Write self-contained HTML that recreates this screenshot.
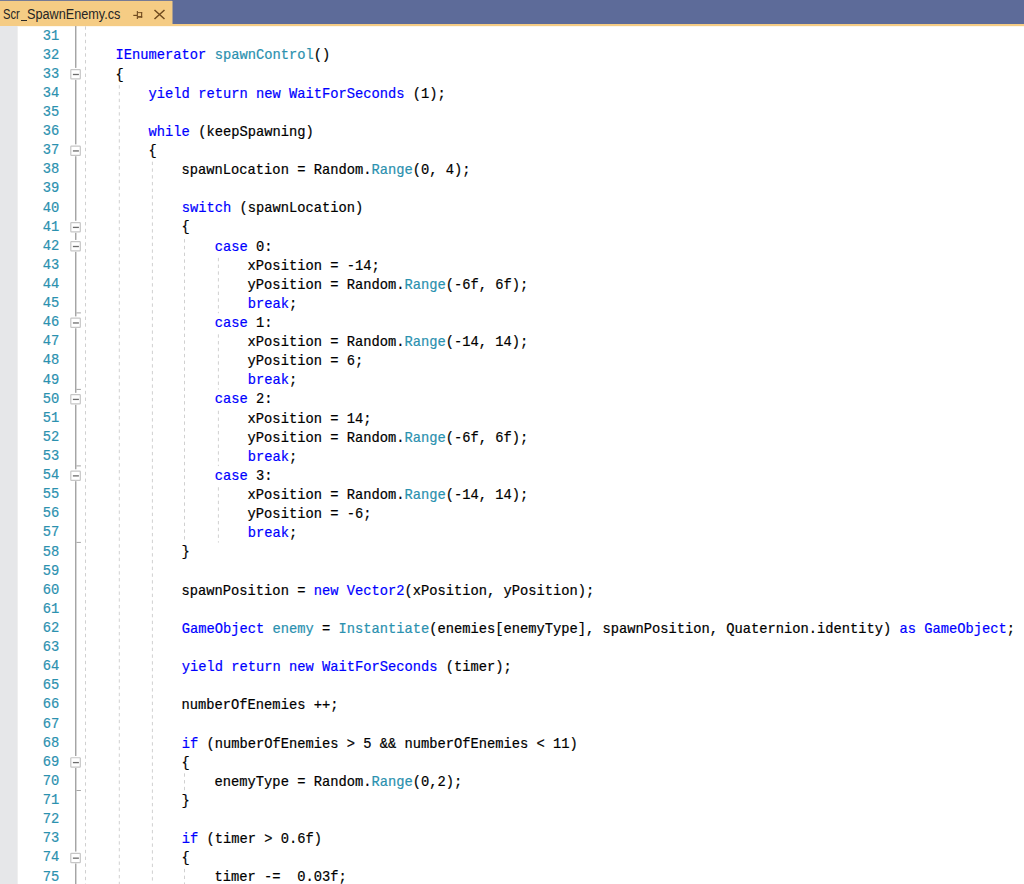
<!DOCTYPE html>
<html><head><meta charset="utf-8"><title>Scr_SpawnEnemy.cs</title>
<style>
html,body{margin:0;padding:0}
body{width:1024px;height:884px;overflow:hidden;background:#fff;position:relative;font-family:"Liberation Mono",monospace}
.bar{position:absolute;left:0;top:0;width:1024px;height:24px;background:#5D6B99}
.strip{position:absolute;left:0;top:24px;width:1024px;height:2px;background:#F5CC84}
.tab{position:absolute;left:0;top:1px;width:172px;height:25px;background:#F5CC84}
.tabt{position:absolute;left:2.6px;top:5.5px;font-family:"Liberation Sans",sans-serif;font-size:14px;transform:scaleX(0.893);transform-origin:0 0;color:#252525;white-space:pre;line-height:16px}
.gut{position:absolute;left:0;top:26px;width:17px;height:858px;background:#E6E7E9;border-right:1px solid #EFEFEF}
.ln,.cd{position:absolute;height:19.125px;line-height:19.125px;font-size:13.75px;white-space:pre}
.ln{left:18px;width:41.3px;text-align:right;color:#2B91AF}
.cd{left:82.6px;color:#000;margin-top:0.8px}
b{font-weight:normal}
.ln,.cd{-webkit-text-stroke:0.2px}
.k{color:#0000FF}
.t{color:#2B91AF}
</style></head><body>
<div class="bar"></div>
<div class="tab"></div>
<div class="strip"></div>
<div style="position:absolute;left:0;top:0;width:172px;height:1px;background:#767B95"></div>
<div style="position:absolute;left:172px;top:1px;width:1px;height:23px;background:#A99D8E"></div>
<div style="position:absolute;left:18px;top:26px;width:1006px;height:1px;background:#FDF7EC"></div>
<div class="tabt" style="left:3.4px;transform:scaleX(0.8)">Scr</div>
<div style="position:absolute;left:21px;top:20px;width:5.8px;height:1.1px;background:#2A2A2A"></div>
<div class="tabt" style="left:26.9px;transform:scaleX(0.905)">SpawnEnemy.cs</div>
<svg style="position:absolute;left:0;top:0" width="172" height="26">
<g stroke="#6F4A1E" fill="none">
<g fill="#6F4A1E" stroke="none"><rect x="133.3" y="14.8" width="3.7" height="1.2"/><rect x="136.8" y="11" width="1.1" height="8"/><rect x="137.9" y="12.2" width="4.3" height="0.9"/><rect x="141.1" y="12.2" width="1.1" height="5.5"/><rect x="137.9" y="16.1" width="4.3" height="1.6"/></g>
<path d="M154.5 10l10 9 M164.5 10l-10 9" stroke-width="1.5"/>
</g></svg>
<div class="gut"></div>

<div class="ln" style="top:26.500px">31</div>
<div class="ln" style="top:45.614px">32</div>
<div class="cd" style="top:45.614px">    <b class="k">IEnumerator</b> <b class="t">spawnControl</b>()</div>
<div class="ln" style="top:64.728px">33</div>
<div class="cd" style="top:64.728px">    {</div>
<div class="ln" style="top:83.842px">34</div>
<div class="cd" style="top:83.842px">        <b class="k">yield</b> <b class="k">return</b> <b class="k">new</b> <b class="k">WaitForSeconds</b> (1);</div>
<div class="ln" style="top:102.956px">35</div>
<div class="ln" style="top:122.070px">36</div>
<div class="cd" style="top:122.070px">        <b class="k">while</b> (keepSpawning)</div>
<div class="ln" style="top:141.184px">37</div>
<div class="cd" style="top:141.184px">        {</div>
<div class="ln" style="top:160.298px">38</div>
<div class="cd" style="top:160.298px">            spawnLocation = Random.<b class="t">Range</b>(0, 4);</div>
<div class="ln" style="top:179.412px">39</div>
<div class="ln" style="top:198.526px">40</div>
<div class="cd" style="top:198.526px">            <b class="k">switch</b> (spawnLocation)</div>
<div class="ln" style="top:217.640px">41</div>
<div class="cd" style="top:217.640px">            {</div>
<div class="ln" style="top:236.754px">42</div>
<div class="cd" style="top:236.754px">                <b class="k">case</b> 0:</div>
<div class="ln" style="top:255.868px">43</div>
<div class="cd" style="top:255.868px">                    xPosition = -14;</div>
<div class="ln" style="top:274.982px">44</div>
<div class="cd" style="top:274.982px">                    yPosition = Random.<b class="t">Range</b>(-6f, 6f);</div>
<div class="ln" style="top:294.096px">45</div>
<div class="cd" style="top:294.096px">                    <b class="k">break</b>;</div>
<div class="ln" style="top:313.210px">46</div>
<div class="cd" style="top:313.210px">                <b class="k">case</b> 1:</div>
<div class="ln" style="top:332.324px">47</div>
<div class="cd" style="top:332.324px">                    xPosition = Random.<b class="t">Range</b>(-14, 14);</div>
<div class="ln" style="top:351.438px">48</div>
<div class="cd" style="top:351.438px">                    yPosition = 6;</div>
<div class="ln" style="top:370.552px">49</div>
<div class="cd" style="top:370.552px">                    <b class="k">break</b>;</div>
<div class="ln" style="top:389.666px">50</div>
<div class="cd" style="top:389.666px">                <b class="k">case</b> 2:</div>
<div class="ln" style="top:408.780px">51</div>
<div class="cd" style="top:408.780px">                    xPosition = 14;</div>
<div class="ln" style="top:427.894px">52</div>
<div class="cd" style="top:427.894px">                    yPosition = Random.<b class="t">Range</b>(-6f, 6f);</div>
<div class="ln" style="top:447.008px">53</div>
<div class="cd" style="top:447.008px">                    <b class="k">break</b>;</div>
<div class="ln" style="top:466.122px">54</div>
<div class="cd" style="top:466.122px">                <b class="k">case</b> 3:</div>
<div class="ln" style="top:485.236px">55</div>
<div class="cd" style="top:485.236px">                    xPosition = Random.<b class="t">Range</b>(-14, 14);</div>
<div class="ln" style="top:504.350px">56</div>
<div class="cd" style="top:504.350px">                    yPosition = -6;</div>
<div class="ln" style="top:523.464px">57</div>
<div class="cd" style="top:523.464px">                    <b class="k">break</b>;</div>
<div class="ln" style="top:542.578px">58</div>
<div class="cd" style="top:542.578px">            }</div>
<div class="ln" style="top:561.692px">59</div>
<div class="ln" style="top:580.806px">60</div>
<div class="cd" style="top:580.806px">            spawnPosition = <b class="k">new</b> <b class="k">Vector2</b>(xPosition, yPosition);</div>
<div class="ln" style="top:599.920px">61</div>
<div class="ln" style="top:619.034px">62</div>
<div class="cd" style="top:619.034px">            <b class="k">GameObject</b> <b class="t">enemy</b> = <b class="t">Instantiate</b>(enemies[enemyType], spawnPosition, Quaternion.identity) <b class="k">as</b> <b class="k">GameObject</b>;</div>
<div class="ln" style="top:638.148px">63</div>
<div class="ln" style="top:657.262px">64</div>
<div class="cd" style="top:657.262px">            <b class="k">yield</b> <b class="k">return</b> <b class="k">new</b> <b class="k">WaitForSeconds</b> (timer);</div>
<div class="ln" style="top:676.376px">65</div>
<div class="ln" style="top:695.490px">66</div>
<div class="cd" style="top:695.490px">            numberOfEnemies ++;</div>
<div class="ln" style="top:714.604px">67</div>
<div class="ln" style="top:733.718px">68</div>
<div class="cd" style="top:733.718px">            <b class="k">if</b> (numberOfEnemies &gt; 5 &amp;&amp; numberOfEnemies &lt; 11)</div>
<div class="ln" style="top:752.832px">69</div>
<div class="cd" style="top:752.832px">            {</div>
<div class="ln" style="top:771.946px">70</div>
<div class="cd" style="top:771.946px">                enemyType = Random.<b class="t">Range</b>(0,2);</div>
<div class="ln" style="top:791.060px">71</div>
<div class="cd" style="top:791.060px">            }</div>
<div class="ln" style="top:810.174px">72</div>
<div class="ln" style="top:829.288px">73</div>
<div class="cd" style="top:829.288px">            <b class="k">if</b> (timer &gt; 0.6f)</div>
<div class="ln" style="top:848.402px">74</div>
<div class="cd" style="top:848.402px">            {</div>
<div class="ln" style="top:867.516px">75</div>
<div class="cd" style="top:867.516px">                timer -=  0.03f;</div>
<svg style="position:absolute;left:0;top:0" width="1024" height="884">
<rect x="75" y="26.00" width="1.45" height="41.89" fill="#A5A5A5"/>
<rect x="75" y="79.79" width="1.45" height="64.56" fill="#A5A5A5"/>
<rect x="75" y="156.24" width="1.45" height="64.56" fill="#A5A5A5"/>
<rect x="75" y="232.70" width="1.45" height="7.21" fill="#A5A5A5"/>
<rect x="75" y="251.81" width="1.45" height="64.56" fill="#A5A5A5"/>
<rect x="75" y="328.27" width="1.45" height="64.56" fill="#A5A5A5"/>
<rect x="75" y="404.72" width="1.45" height="64.56" fill="#A5A5A5"/>
<rect x="75" y="481.18" width="1.45" height="274.81" fill="#A5A5A5"/>
<rect x="75" y="767.89" width="1.45" height="83.67" fill="#A5A5A5"/>
<rect x="75" y="863.46" width="1.45" height="20.54" fill="#A5A5A5"/>
<rect x="70.8" y="69.64" width="9.5" height="9.3" rx="0.6" fill="#fff" stroke="#C6C6C6" stroke-width="1.2"/>
<rect x="72.9" y="73.84" width="6" height="1.3" fill="#6D6D6D"/>
<rect x="70.8" y="146.09" width="9.5" height="9.3" rx="0.6" fill="#fff" stroke="#C6C6C6" stroke-width="1.2"/>
<rect x="72.9" y="150.29" width="6" height="1.3" fill="#6D6D6D"/>
<rect x="70.8" y="222.55" width="9.5" height="9.3" rx="0.6" fill="#fff" stroke="#C6C6C6" stroke-width="1.2"/>
<rect x="72.9" y="226.75" width="6" height="1.3" fill="#6D6D6D"/>
<rect x="70.8" y="241.66" width="9.5" height="9.3" rx="0.6" fill="#fff" stroke="#C6C6C6" stroke-width="1.2"/>
<rect x="72.9" y="245.86" width="6" height="1.3" fill="#6D6D6D"/>
<rect x="70.8" y="318.12" width="9.5" height="9.3" rx="0.6" fill="#fff" stroke="#C6C6C6" stroke-width="1.2"/>
<rect x="72.9" y="322.32" width="6" height="1.3" fill="#6D6D6D"/>
<rect x="70.8" y="394.57" width="9.5" height="9.3" rx="0.6" fill="#fff" stroke="#C6C6C6" stroke-width="1.2"/>
<rect x="72.9" y="398.77" width="6" height="1.3" fill="#6D6D6D"/>
<rect x="70.8" y="471.03" width="9.5" height="9.3" rx="0.6" fill="#fff" stroke="#C6C6C6" stroke-width="1.2"/>
<rect x="72.9" y="475.23" width="6" height="1.3" fill="#6D6D6D"/>
<rect x="70.8" y="757.74" width="9.5" height="9.3" rx="0.6" fill="#fff" stroke="#C6C6C6" stroke-width="1.2"/>
<rect x="72.9" y="761.94" width="6" height="1.3" fill="#6D6D6D"/>
<rect x="70.8" y="853.31" width="9.5" height="9.3" rx="0.6" fill="#fff" stroke="#C6C6C6" stroke-width="1.2"/>
<rect x="72.9" y="857.51" width="6" height="1.3" fill="#6D6D6D"/>
<rect x="76.4" y="312.40" width="4.5" height="1" fill="#A5A5A5"/>
<rect x="76.4" y="388.90" width="4.5" height="1" fill="#A5A5A5"/>
<rect x="76.4" y="465.40" width="4.5" height="1" fill="#A5A5A5"/>
<rect x="76.4" y="541.90" width="4.5" height="1" fill="#A5A5A5"/>
<rect x="76.4" y="790.00" width="4.5" height="1" fill="#A5A5A5"/>
<line x1="85.50" x2="85.50" y1="26.30" y2="886.63" stroke="#D0D0D0" stroke-width="1" stroke-dasharray="3.375 3.375"/>
<line x1="119.30" x2="119.30" y1="85.24" y2="886.63" stroke="#D0D0D0" stroke-width="1" stroke-dasharray="3.375 3.375"/>
<line x1="152.40" x2="152.40" y1="161.70" y2="886.63" stroke="#D0D0D0" stroke-width="1" stroke-dasharray="3.375 3.375"/>
<line x1="184.50" x2="184.50" y1="239.15" y2="542.58" stroke="#D0D0D0" stroke-width="1" stroke-dasharray="3.375 3.375"/>
<line x1="218.40" x2="218.40" y1="257.87" y2="313.21" stroke="#D0D0D0" stroke-width="1" stroke-dasharray="3.375 3.375"/>
<line x1="218.40" x2="218.40" y1="334.32" y2="389.67" stroke="#D0D0D0" stroke-width="1" stroke-dasharray="3.375 3.375"/>
<line x1="218.40" x2="218.40" y1="410.78" y2="466.12" stroke="#D0D0D0" stroke-width="1" stroke-dasharray="3.375 3.375"/>
<line x1="218.40" x2="218.40" y1="487.24" y2="542.58" stroke="#D0D0D0" stroke-width="1" stroke-dasharray="3.375 3.375"/>
<line x1="184.50" x2="184.50" y1="773.35" y2="791.06" stroke="#D0D0D0" stroke-width="1" stroke-dasharray="3.375 3.375"/>
<line x1="184.50" x2="184.50" y1="868.92" y2="886.63" stroke="#D0D0D0" stroke-width="1" stroke-dasharray="3.375 3.375"/>
</svg>
</body></html>
